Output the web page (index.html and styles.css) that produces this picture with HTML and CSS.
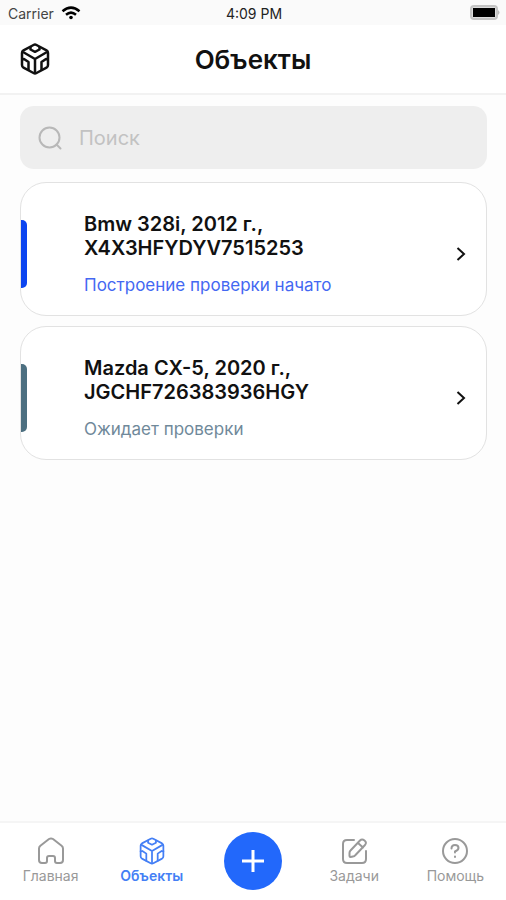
FILE: index.html
```html
<!DOCTYPE html>
<html lang="ru">
<head>
    <meta charset="UTF-8">
    <meta name="viewport" content="width=device-width, initial-scale=1.0">
    <title>Объекты</title>
    <link rel="stylesheet" href="styles.css">
</head>
<body>
    <svg class="sprite" width="0" height="0" aria-hidden="true">
        <symbol id="cube" viewBox="0 0 30 32">
            <path d="M13.500 2 Q15 1.200 16.500 2 L26.500 7.300 Q28 8.200 28 10 V22 Q28 23.800 26.500 24.700 L16.500 30 Q15 30.800 13.500 30 L3.500 24.700 Q2 23.800 2 22 V10 Q2 8.200 3.500 7.300 Z"/>
            <path d="M3 9 L15 16 L27 9 M15 16 V30"/>
            <path d="M10.500 4 V6.500 L15 8.800 L19.500 6.500 V4"/>
            <path d="M2 16.500 L4 16 L8.500 19 V27 M28 16.500 L26 16 L21.500 19 V27"/>
        </symbol>
    </svg>

    <div class="screen">
        <div class="status-bar">
            <div class="carrier">
                <span>Carrier</span>
                <svg width="20" height="14" viewBox="0 0 20 14" fill="none" stroke="#000" stroke-width="2.5">
                    <path d="M1.500 5.300 Q10 -2 18.500 5.300"/>
                    <path d="M5 8.800 Q10 4.500 15 8.800"/>
                    <circle cx="10" cy="11.500" r="1.800" fill="#000" stroke="none"/>
                </svg>
            </div>
            <span class="time">4:09 PM</span>
            <svg class="battery" width="31" height="16" viewBox="0 0 31 16">
                <rect x="2" y="1" width="26" height="13" rx="3" fill="#ddd" stroke="#c4c4c4" stroke-width="2"/>
                <rect x="4" y="3" width="22" height="9" fill="#000"/>
                <path d="M29 5 Q32 7.500 29 10 Z" fill="#bbb"/>
            </svg>
        </div>

        <header class="header">
            <svg class="logo" width="30" height="32"><use href="#cube"/></svg>
            <h1>Объекты</h1>
        </header>

        <main class="content">
            <label class="search">
                <svg width="24" height="24" viewBox="0 0 24 24" fill="none" stroke="#b8b8b8" stroke-width="2" stroke-linecap="round">
                    <circle cx="11.500" cy="11.500" r="10"/>
                    <path d="M18.500 18.500 L22.500 22.500"/>
                </svg>
                <input type="search" placeholder="Поиск" aria-label="Поиск">
            </label>

            <a class="card card-started" href="#">
                <span class="card-text">
                    <strong>Bmw 328i, 2012 г., X4X3HFYDYV7515253</strong>
                    <span class="card-status">Построение проверки начато</span>
                </span>
                <svg class="chevron" width="10" height="16" viewBox="0 0 10 16"><path d="M1.500 2 L8 8 L1.500 14"/></svg>
            </a>

            <a class="card card-waiting" href="#">
                <span class="card-text">
                    <strong>Mazda CX-5, 2020 г., JGCHF726383936HGY</strong>
                    <span class="card-status">Ожидает проверки</span>
                </span>
                <svg class="chevron" width="10" height="16" viewBox="0 0 10 16"><path d="M1.500 2 L8 8 L1.500 14"/></svg>
            </a>
        </main>

        <nav class="tabs">
            <a class="tab" href="#">
                <svg width="28" height="28" viewBox="0 0 28 28">
                    <path d="M2 11.500 Q2 9.800 3.400 8.700 L12 2 Q14 0.800 16 2 L24.600 8.700 Q26 9.800 26 11.500 V23 Q26 26 23 26 H20 Q18 26 18 24 V21 Q18 19 16 19 H12 Q10 19 10 21 V24 Q10 26 8 26 H5 Q2 26 2 23 Z"/>
                </svg>
                <span>Главная</span>
            </a>
            <a class="tab tab-active" href="#">
                <svg width="28" height="28"><use href="#cube"/></svg>
                <span>Объекты</span>
            </a>
            <button class="add" type="button" aria-label="Добавить">
                <svg width="26" height="26" viewBox="0 0 26 26"><path d="M13 2 V24 M2 13 H24"/></svg>
            </button>
            <a class="tab" href="#">
                <svg width="28" height="28" viewBox="0 0 28 28">
                    <path d="M14 3 H7 Q3 3 3 7 V22 Q3 26 7 26 H22 Q26 26 26 22 V14"/>
                    <path d="M9.500 19 V16 Q9.500 14.500 10.500 13.500 L20 3.500 Q22 1.500 24.500 3.500 Q27 5.500 25 8 L15.500 18 Q14.500 19.500 13 19.500 L10.500 20 Q9.500 20 9.500 19 Z M18 6 L23 10.500"/>
                </svg>
                <span>Задачи</span>
            </a>
            <a class="tab" href="#">
                <svg width="28" height="28" viewBox="0 0 28 28">
                    <circle cx="14" cy="14" r="12"/>
                    <path d="M10.500 11.500 Q10.500 8 14 8 Q17.500 8 17.500 11 Q17.500 13 14 14.500 V15.500 M14 19.500 V20"/>
                </svg>
                <span>Помощь</span>
            </a>
        </nav>
    </div>
</body>
</html>
```
FILE: styles.css
```css
* {
    box-sizing: border-box;
}
body {
    font-family: Inter, "Liberation Sans", sans-serif;
    margin: 0;
    background-color: #fdfdfd;
    color: #111;
}
a {
    color: inherit;
    text-decoration: none;
}
svg {
    display: block;
    flex-shrink: 0;
}
.sprite {
    position: absolute;
}
.screen {
    display: flex;
    flex-direction: column;
    min-height: 100vh;
}
.status-bar {
    display: grid;
    grid-template-columns: 1fr auto 1fr;
    align-items: center;
    height: 25px;
    padding: 1px 6px 0 8px;
    background-color: #fafafa;
    font-size: 14px;
}
.carrier {
    display: flex;
    align-items: center;
    gap: 7px;
    color: #444;
}
.time {
    color: #222;
}
.battery {
    justify-self: end;
}
.header {
    display: grid;
    grid-template-columns: 1fr auto 1fr;
    align-items: center;
    height: 70px;
    padding: 0 20px;
    background-color: #fff;
    border-bottom: 2px solid #f2f2f2;
}
.header h1 {
    margin: 0;
    font-size: 26px;
    font-weight: 600;
}
.logo {
    fill: none;
    stroke: #111;
    stroke-width: 2.5;
    stroke-linejoin: round;
}
.content {
    display: flex;
    flex: 1;
    flex-direction: column;
    gap: 10px;
    padding: 11px 19px 20px 20px;
}
.search {
    display: flex;
    align-items: center;
    gap: 17px;
    height: 63px;
    margin-bottom: 3px;
    padding: 0 18px;
    background-color: #eee;
    border-radius: 14px;
}
.search input {
    flex: 1;
    min-width: 0;
    padding: 0;
    border: none;
    outline: none;
    background: none;
    font-family: inherit;
    font-size: 20px;
}
.search input::placeholder {
    color: #c2c2c2;
}
.card {
    display: flex;
    align-items: center;
    min-height: 134px;
    padding: 9px 20px 0 0;
    background-color: #fff;
    border: 1px solid #e2e2e2;
    border-radius: 26px;
}
.card::before {
    content: "";
    width: 6px;
    height: 68px;
    margin-right: 57px;
    border-radius: 0 5px 5px 0;
    background-color: currentColor;
}
.card-text {
    flex: 1;
}
.card strong {
    display: block;
    max-width: 260px;
    color: #111;
    font-size: 20px;
    font-weight: 600;
    line-height: 24px;
}
.card-status {
    display: block;
    margin-top: 14px;
    font-size: 17px;
    line-height: 22px;
}
.card-started {
    color: #0b45f0;
}
.card-started .card-status {
    color: #4468f2;
}
.card-waiting {
    color: #4c6f80;
}
.card-waiting .card-status {
    color: #70899a;
}
.chevron {
    fill: none;
    stroke: #111;
    stroke-width: 2;
}
.tabs {
    display: grid;
    grid-template-columns: repeat(5, 1fr);
    align-items: center;
    justify-items: center;
    height: 79px;
    padding-bottom: 1px;
    background-color: #fff;
    border-top: 2px solid #f5f5f5;
}
.tab {
    display: flex;
    flex-direction: column;
    align-items: center;
    gap: 2px;
    color: #999;
    font-size: 14px;
    line-height: 18px;
}
.tab svg {
    fill: none;
    stroke: currentColor;
    stroke-width: 2;
    stroke-linecap: round;
    stroke-linejoin: round;
}
.tab-active {
    color: #447ff5;
    font-weight: 600;
}
.add {
    display: flex;
    align-items: center;
    justify-content: center;
    width: 58px;
    height: 58px;
    padding: 0;
    border: none;
    border-radius: 50%;
    background-color: #2268fb;
    cursor: pointer;
}
.add svg {
    fill: none;
    stroke: #fff;
    stroke-width: 3;
}
```
